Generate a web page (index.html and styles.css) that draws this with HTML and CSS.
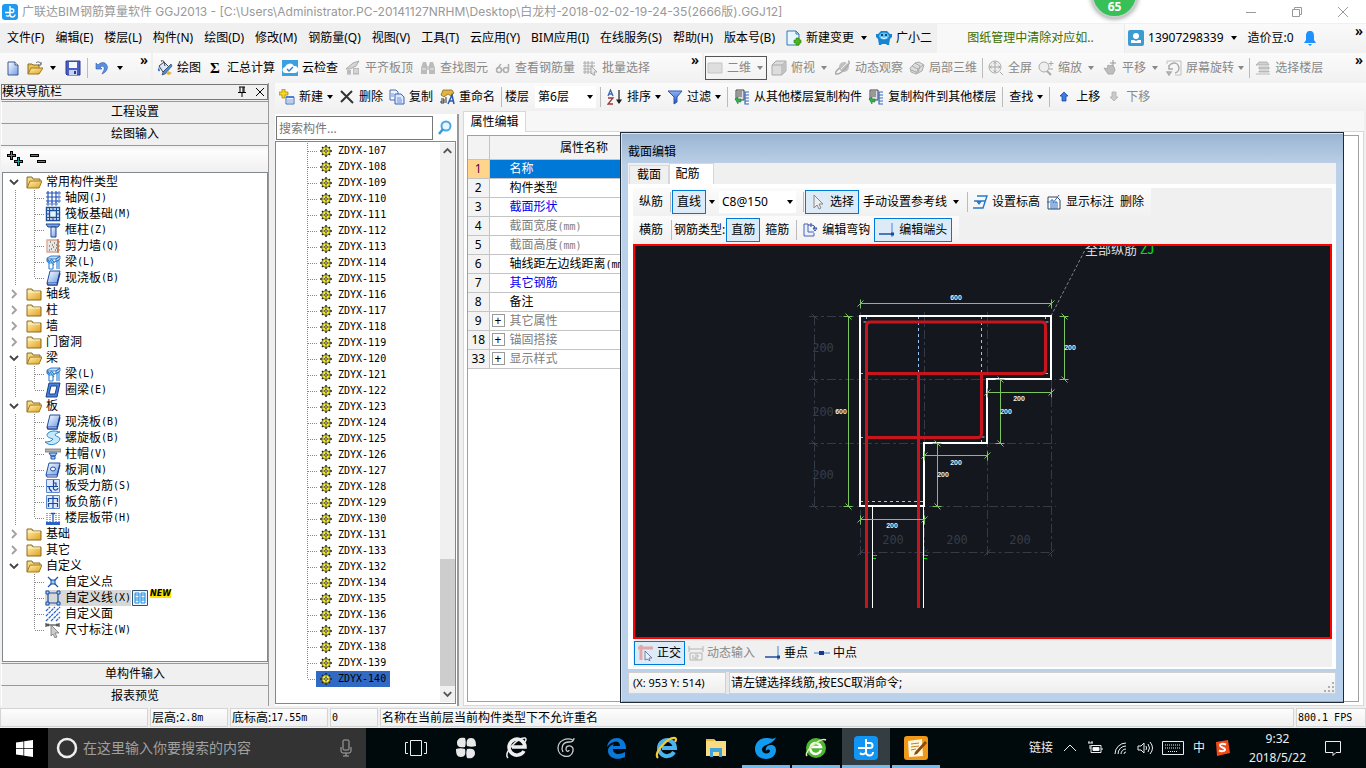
FILE: index.html
```
<!DOCTYPE html>
<html lang="zh-CN">
<head>
<meta charset="utf-8">
<title>广联达BIM钢筋算量软件 GGJ2013</title>
<link rel="stylesheet" href="styles.css">
</head>
<body>
<svg class="defs" aria-hidden="true">
  <defs>
    <linearGradient id="gold" x1="0" y1="0" x2="1" y2="1"><stop offset="0" stop-color="#fff3b0"/><stop offset="1" stop-color="#e0a020"/></linearGradient>
    <linearGradient id="blue" x1="0" y1="0" x2="1" y2="1"><stop offset="0" stop-color="#fff"/><stop offset="1" stop-color="#6f9be8"/></linearGradient>
    <linearGradient id="deep" x1="0" y1="0" x2="0" y2="1"><stop offset="0" stop-color="#8fb4f5"/><stop offset="1" stop-color="#1c4fc0"/></linearGradient>
  </defs>
  <symbol id="app" viewBox="0 0 16 16"><rect width="16" height="16" rx="3" fill="#1e9af0"/><path d="M8 2v8.500a2.500 2.500 0 0 0 5 0M8 5h2.500a1.800 1.800 0 0 1 0 3.500H3M8 10.500a2.500 2.500 0 0 1-4 1" fill="none" stroke="#fff" stroke-width="1.400"/></symbol>
  <symbol id="new" viewBox="0 0 16 16"><path d="M3 2h7l3 3v10H3z" fill="url(#blue)" stroke="#3c5a8c"/><path d="M10 2v3h3" fill="#fff" stroke="#3c5a8c"/></symbol>
  <symbol id="open" viewBox="0 0 16 16"><path d="M1 14V4h4l1 1h6v3" fill="#e9c25a" stroke="#8a6d1e"/><path d="M1 14l3-6h12l-4 6z" fill="url(#gold)" stroke="#a07818"/><path d="M9 3c2-2 4-1 5 1m0-2v3h-3" fill="none" stroke="#567"/></symbol>
  <symbol id="save" viewBox="0 0 16 16"><path d="M1 1h14v14H2l-1-1z" fill="#4a5fc4" stroke="#2a3a90"/><path d="M4 2h8v6H4z" fill="#f4f6ff"/><path d="M4 10h8v5H4z" fill="#c9d2f0"/><path d="M9 11h2v3H9z" fill="#2a3a90"/></symbol>
  <symbol id="undo" viewBox="0 0 16 16"><path d="M2 3v6h6L6 7c3-2 5 0 4 3l-2 4c5-2 7-7 4-10-2-2-5-2-8 1z" fill="#5a8fe0" stroke="#2c5cb0" stroke-width=".6"/></symbol>
  <symbol id="paint" viewBox="0 0 16 16"><path d="M2 6l5-4 5 5-6 5z" fill="#dce8f8" stroke="#345"/><path d="M2 7c-2 3-1 5 1 4" fill="#3a70c0"/><path d="M5 2c-2-2 1-3 2 0l1 4" fill="none" stroke="#445"/><path d="M14 4l1 2-7 8-3 1 1-3z" fill="#4a8fd8" stroke="#234" stroke-width=".6"/><path d="M11 11l4 2-3 2-3-1z" fill="#ebb432"/></symbol>
  <symbol id="cloud" viewBox="0 0 16 16"><rect width="16" height="16" fill="#3aa0e0"/><path d="M4 13a3 3 0 0 1-1-6 5 5 0 0 1 9-1 3.500 3.500 0 0 1 1 7z" fill="#fff"/><path d="M5 9l2 2 4-4" fill="none" stroke="#2288cc" stroke-width="1.400"/></symbol>
  <symbol id="align" viewBox="0 0 16 16"><path d="M1 9l7-6 6-2-3 5-6 3z" fill="#d5d5d5" stroke="#aaa"/><path d="M2 10h4v5H2zM8 8h6v7H8z" fill="#bbb"/><path d="M1 15h14M9 10h4M9 12h4" stroke="#eee"/></symbol>
  <symbol id="bino" viewBox="0 0 16 16"><path d="M3 2h3l1 3v9H1V8zM10 2h3l2 6v6H9V5z" fill="#bbb"/><path d="M7 6h2v4H7z" fill="#ccc"/><path d="M2 9h4M10 9h4" stroke="#eee"/></symbol>
  <symbol id="glasses" viewBox="0 0 16 16"><g fill="none" stroke="#b0b0b0" stroke-width="1.500"><circle cx="4" cy="10" r="2.500"/><circle cx="11" cy="10" r="2.500"/><path d="M2 9l4-5M13.500 10V4M6.500 10h2"/></g></symbol>
  <symbol id="batch" viewBox="0 0 16 16"><path d="M1 3h12M1 6h12M1 9h9M1 12h8M3 1v13M6 1v13M10 1v8" stroke="#aaa" fill="none"/><path d="M9 6l6 6h-3l1 3h-2l-1-2-1 1z" fill="#e8e8e8" stroke="#999" stroke-width=".8"/></symbol>
  <symbol id="plane" viewBox="0 0 16 16"><path d="M1 3h14v10H1z" fill="#dedede" stroke="#c4c4c4"/></symbol>
  <symbol id="cube" viewBox="0 0 16 16"><path d="M1 5l4-4h10v10l-4 4H1z" fill="#dcdcdc" stroke="#aaa"/><path d="M1 5h10v10M11 5l4-4" fill="none" stroke="#aaa"/><path d="M11 5l4-4v10l-4 4z" fill="#c2c2c2"/></symbol>
  <symbol id="orbit" viewBox="0 0 16 16"><circle cx="9" cy="7" r="5" fill="#c0c0c0"/><path d="M13 1c5 1-7 14-12 13-2-1 2-5 4-6" fill="none" stroke="#aaa" stroke-width="1.500"/><path d="M6 9l6-6" stroke="#eee"/></symbol>
  <symbol id="local3d" viewBox="0 0 16 16"><path d="M1 8l5-5 4-1 5 3-2 6-6 3-5-2z" fill="#ddd" stroke="#aaa"/><path d="M3 6l6 3 5-4M9 9l-2 5M6 3l5 3-2 7M2 10l5 2" fill="none" stroke="#aaa"/></symbol>
  <symbol id="fit" viewBox="0 0 16 16"><circle cx="7" cy="7" r="6" fill="#eee" stroke="#aaa"/><path d="M7 2v10M2 7h10M5.500 3.500L7 2l1.500 1.500M5.500 10.500L7 12l1.500-1.500M3.500 5.500L2 7l1.500 1.500M10.500 5.500L12 7l-1.500 1.500M12 12l3 3" stroke="#aaa" fill="none"/></symbol>
  <symbol id="scale" viewBox="0 0 16 16"><circle cx="6" cy="7" r="5" fill="#eee" stroke="#aaa"/><path d="M9 11l4 4" stroke="#aaa" stroke-width="2"/><path d="M13 1v5M10.500 3.500h5M11 9h4" stroke="#aaa"/></symbol>
  <symbol id="pan" viewBox="0 0 16 16"><path d="M2 8l3 1 1-4 2 1 2-1 2 2 1 3-2 4H6z" fill="#bdbdbd" stroke="#aaa"/><path d="M11 0v6M8 3h6" stroke="#999"/></symbol>
  <symbol id="rotate" viewBox="0 0 16 16"><path d="M1 4V1h14v14H9" fill="none" stroke="#c0c0c0"/><path d="M3 9a5 5 0 1 1 6 4M3 5v4h4M1 12h4l-2 3z" fill="none" stroke="#aaa" stroke-width="1.500"/></symbol>
  <symbol id="floors" viewBox="0 0 16 16"><path d="M4 2h8l2 3H1zM4 7h10v2H4zM4 11h10v1H4zM1 14h14" fill="#d0d0d0" stroke="#aaa" stroke-width=".8"/></symbol>
  <symbol id="docplus" viewBox="0 0 16 16"><path d="M1 1h9l3 3v11H1z" fill="#eaf6ff" stroke="#2e7ab8"/><path d="M10 1v3h3" fill="none" stroke="#2e7ab8"/><path d="M10 8h3v2h2v3h-2v2h-3v-2H8v-3h2z" fill="#4db51e" stroke="#2d7d10" stroke-width=".6"/></symbol>
  <symbol id="robot" viewBox="0 0 16 16"><path d="M5 1h6l3 3 2 0v3l-2 2-1 6h-2l-1-1H6l-1 1H3L2 9 0 7V4h2z" fill="#1684d0"/><ellipse cx="8" cy="6" rx="5" ry="3.500" fill="#5fc0f4"/><circle cx="6" cy="5" r="1" fill="#024"/><circle cx="10" cy="5" r="1" fill="#024"/><path d="M5 7.500q3 2 6 0" fill="none" stroke="#fff"/></symbol>
  <symbol id="user" viewBox="0 0 16 16"><rect width="16" height="16" rx="2" fill="#3a9cd2"/><circle cx="8" cy="6" r="3" fill="#fff"/><path d="M3 13V10h3l2 1 2-1h3v3z" fill="#fff"/></symbol>
  <symbol id="bell" viewBox="0 0 16 16"><path d="M8 1c3 0 4 2 4 5v4l2 3H2l2-3V6c0-3 1-5 4-5zM6 14h4l-2 2z" fill="#1e90ff"/></symbol>
  <symbol id="create" viewBox="0 0 16 16"><path d="M3 0h3v3h3v3H6v3H3V6H0V3h3z" fill="#f6d32a" stroke="#8d7300" stroke-width=".6"/><path d="M7 8h8v7H7z" fill="#eaf2ff" stroke="#456fc0"/><path d="M7 7h8v2H7z" fill="#4a7edc"/><path d="M8 11h6M8 13h6" stroke="#88a8dc"/></symbol>
  <symbol id="cross" viewBox="0 0 16 16"><path d="M2 2l12 12M13 2L2 13" stroke="#333" stroke-width="2" fill="none"/></symbol>
  <symbol id="copy" viewBox="0 0 16 16"><path d="M1 1h6l2 2v8H1z" fill="#eef4ff" stroke="#4a6cae"/><path d="M6 5h6l3 3v7H6z" fill="#dbe8ff" stroke="#3d62b0"/><path d="M8 9h4M8 11h5M8 13h5M2 5h3M2 7h3" stroke="#6d92d8"/></symbol>
  <symbol id="rename" viewBox="0 0 16 16"><path d="M4 1h9l2 3-3 3-3-2-4 3-3-2z" fill="#e2b53c" stroke="#765c1c" stroke-width=".7"/><path d="M9 15l4-9 2 9M10 12h5" stroke="#2858b0" stroke-width="1.500" fill="none"/><path d="M2 10h3v4H2v-2h3M7 8v6" stroke="#333" fill="none"/></symbol>
  <symbol id="sort" viewBox="0 0 16 16"><path d="M1 7l2.500-6L6 7M2 5h3" fill="none" stroke="#3c66b8" stroke-width="1.300"/><path d="M1 9h5l-5 6h5" fill="none" stroke="#a03838" stroke-width="1.300"/><path d="M12 1v12M10 11l2 3 2-3z" stroke="#222" stroke-width="1.200"/></symbol>
  <symbol id="funnel" viewBox="0 0 16 16"><path d="M1 2h14l-5 6v5l-3 2V8z" fill="url(#deep)" stroke="#2a56b0"/></symbol>
  <symbol id="fcopy" viewBox="0 0 16 16"><path d="M2 1h8v10H2z" fill="#ddd" stroke="#444"/><path d="M3 3h5M3 5h5M3 7h5" stroke="#555"/><path d="M1 10l3-2v2h3v3H4v2z" fill="#32b04a" stroke="#117028" stroke-width=".5"/><path d="M15 3h-4v12h4M11 6h4M11 9h4M11 12h4" stroke="#3468c0" fill="none" stroke-width="1.200"/></symbol>
  <symbol id="up" viewBox="0 0 16 16"><path d="M8 3l4 4h-2v5H6V7H4z" fill="#3d7bea" stroke="#1b49a0" stroke-width=".8"/></symbol>
  <symbol id="down" viewBox="0 0 16 16"><path d="M8 12l4-4h-2V3H6v5H4z" fill="#cacaca" stroke="#b0b0b0" stroke-width=".8"/></symbol>
  <symbol id="chev-d" viewBox="0 0 12 16"><path d="M2 6l4 4 4-4" fill="none" stroke="#444" stroke-width="1.800"/></symbol>
  <symbol id="chev-r" viewBox="0 0 12 16"><path d="M4 4l4 4-4 4" fill="none" stroke="#a0a0a0" stroke-width="1.800"/></symbol>
  <symbol id="fold" viewBox="0 0 16 16"><path d="M1 14V3h5l1 2h8v9z" fill="url(#gold)" stroke="#8a6a20"/><path d="M2 6h12" stroke="#fff8d0"/></symbol>
  <symbol id="foldo" viewBox="0 0 16 16"><path d="M1 14V3h5l1 2h7v3" fill="#f3d983" stroke="#8a6a20"/><path d="M1 14l3-7h12l-3 7z" fill="url(#gold)" stroke="#a07818"/></symbol>
  <symbol id="grid" viewBox="0 0 16 16"><path d="M1 3h12M1 7h12M1 11h12M3 1v13M7 1v13M11 1v13" stroke="#2456b8" stroke-width="1.200"/><path d="M13 2h2v2h-2zM13 6h2v2h-2zM13 10h2v2h-2zM2 13h2v2H2zM6 13h2v2H6zM10 13h2v2h-2z" fill="#fff" stroke="#2456b8" stroke-width=".8"/></symbol>
  <symbol id="raft" viewBox="0 0 16 16"><path d="M1.500 1.500h13v13h-13zM4.500 4.500h7v7h-7z" fill="#e6f0ff" stroke="#1b4f98" stroke-width="1.400"/><path d="M1 4.500h14M1 11.500h14M4.500 1v14M11.500 1v14M8 1v3M8 12v3M1 8h3M12 8h3" stroke="#1b4f98"/></symbol>
  <symbol id="col" viewBox="0 0 16 16"><path d="M1 2h14l-2 3H3z" fill="#7aa0ee" stroke="#1c4690"/><path d="M6 5h5v10H6z" fill="url(#blue)" stroke="#1c4690"/></symbol>
  <symbol id="wall" viewBox="0 0 16 16"><path d="M2 2h11v12H2z" fill="#e9e6e4" stroke="#d8a890" stroke-width="1.300"/><path d="M5 4h1M9 5h1M4 8h1M8 9h1M11 7h1M6 11h1M10 12h1M11 10h1M7 7h1M4 12h1" stroke="#444"/><path d="M13 1v14" stroke="#a05028"/><path d="M12 4h3M12 8h3M12 12h3" stroke="#d07020"/></symbol>
  <symbol id="beam" viewBox="0 0 16 16"><path d="M2 4l4-2h9l-4 3H2zM11 5l4-3v3l-4 3z" fill="#c2dcfa" stroke="#2a70c0" stroke-width=".9"/><path d="M4 15V9l-2-2V5M8 15V9l3-2M4 9h4M12 15V7l2-1v9M4 15h4M5 6l4 5M2 5l3 3M6 5l3 3" fill="none" stroke="#2a80d0" stroke-width="1.100"/></symbol>
  <symbol id="slab" viewBox="0 0 16 16"><path d="M5 1h10l-3 12H2z" fill="url(#blue)" stroke="#1c4fa0"/><path d="M2 13l1 2h9l3-12" fill="none" stroke="#16419a" stroke-width="1.300"/></symbol>
  <symbol id="ring" viewBox="0 0 16 16"><path d="M4 1h11l-3 14H1z" fill="#4b80dc" stroke="#163f90"/><path d="M6 4h6l-2 8H4z" fill="#fff" stroke="#163f90"/></symbol>
  <symbol id="spiral" viewBox="0 0 16 16"><path d="M3 3c4-3 8-2 12-1-3 1-5 2-5 3 2 2 5 2 5 4-1 4-7 7-12 5L0 12c4 0 7-1 8-3C5 8 0 7 3 3z" fill="#c4e8fc" stroke="#2685cc"/></symbol>
  <symbol id="cap" viewBox="0 0 16 16"><path d="M0 3h16v3H0z" fill="#b4b4b4" stroke="#666" stroke-width=".7"/><path d="M4 7h8l-2 3H6zM6 10h4v3H6z" fill="#a9caf5" stroke="#1c56b0"/></symbol>
  <symbol id="hole" viewBox="0 0 16 16"><path d="M4 1h11l-3 12H1z" fill="url(#blue)" stroke="#1c4fa0"/><path d="M1 13l1 2h10l3-12" fill="none" stroke="#16419a"/><ellipse cx="8" cy="7" rx="2.500" ry="2" fill="#fff" stroke="#1c4fa0"/></symbol>
  <symbol id="barS" viewBox="0 0 16 16"><path d="M1.500 1.500h13v13h-13z" fill="#dce8fc" stroke="#5c86d0"/><path d="M2 8.500h11M8.500 2v9a2.500 2.500 0 0 0 4.500-1M8.500 5h2.500v3M4 8.500c0 3 1 4 3 5" fill="none" stroke="#1648a8" stroke-width="1.200"/></symbol>
  <symbol id="barF" viewBox="0 0 16 16"><path d="M1.500 1.500h13v13h-13z" fill="#dce8fc" stroke="#5c86d0"/><path d="M3.500 8V4.500h9V8M8 2v12M3.500 13V9.500h9V13" fill="none" stroke="#1648a8" stroke-width="1.200"/></symbol>
  <symbol id="band" viewBox="0 0 16 16"><path d="M1 12h14v3H1z" fill="#2c62c8"/><path d="M2 3v9M14 3v9M5 3v9M11 3v9" fill="none" stroke="#2456b8" stroke-dasharray="1 1"/><path d="M6 3.500h4M8 3v9" stroke="#2456b8" stroke-width="1.300"/></symbol>
  <symbol id="pt" viewBox="0 0 16 16"><path d="M3 3l10 10M13 3L3 13" stroke="#1c4fa0" stroke-width="1.200"/><path d="M6 6h4v4H6z" fill="#8fd0ff" stroke="#1c4fa0"/></symbol>
  <symbol id="poly" viewBox="0 0 16 16"><path d="M3 3h10v10H3z" fill="none" stroke="#1c4fa0" stroke-width="1.200"/><path d="M1 1h3v3H1zM12 1h3v3h-3zM1 12h3v3H1zM12 12h3v3h-3z" fill="#a8d0ff" stroke="#1c4fa0"/></symbol>
  <symbol id="hatch" viewBox="0 0 16 16"><path d="M1 5l4-4M1 10l9-9M1 15L15 1M6 15l9-9M11 15l4-4" stroke="#2c66c8" stroke-width="1.300" stroke-dasharray="3 .7"/></symbol>
  <symbol id="dimn" viewBox="0 0 16 16"><path d="M1 1v4M14 1v4M1 3h13M3 1.500v3M12 1.500v3" stroke="#222"/><path d="M6 3l8 8h-4l2 4-2 1-2-4-2 2z" fill="#ccc" stroke="#777" stroke-width=".8"/></symbol>
  <symbol id="gear" viewBox="0 0 12 12"><path d="M6 0v12M0 6h12M2 2l8 8M10 2l-8 8" stroke="#222" stroke-width="1.500"/><circle cx="6" cy="6" r="4.200" fill="#f6ee20" stroke="#333" stroke-width=".8"/><path d="M6 2v8M2 6h8" stroke="#555" stroke-width=".7"/><circle cx="6" cy="6" r="1.300" fill="#fff" stroke="#222" stroke-width=".8"/></symbol>
  <symbol id="mag" viewBox="0 0 16 16"><circle cx="9" cy="6" r="4.500" fill="#e8f6ff" stroke="#4aa8e4" stroke-width="2"/><path d="M6 9l-4 5" stroke="#3c98dc" stroke-width="2.500"/></symbol>
  <symbol id="cursor" viewBox="0 0 16 16"><path d="M4 1l9 9H9l2 4-2 1-2-4-3 3z" fill="#eee" stroke="#888"/></symbol>
  <symbol id="level" viewBox="0 0 16 16"><path d="M5 2h10l-4 12H1M2 7h11" fill="none" stroke="#2878c8" stroke-width="1.400"/><path d="M4 7h6l-3 4z" fill="#2878c8"/></symbol>
  <symbol id="note" viewBox="0 0 16 16"><path d="M2 3h9l3 3v9H2z" fill="#fff" stroke="#345"/><path d="M5 15V6h2v9M9 15V8h2v7M1 8h3M13 1L7 9" stroke="#2868c0" fill="none"/></symbol>
  <symbol id="hook" viewBox="0 0 16 16"><path d="M2 2v12h10v-3M2 2h4v8h6" fill="#eaf0ff" stroke="#4a63b0"/><path d="M6 3h4q3 0 3 4M9 1v4M11 6h4l-2 3z" fill="none" stroke="#2c4ca0"/></symbol>
  <symbol id="perp" viewBox="0 0 16 16"><path d="M13 1v14" stroke="#78a8e0" stroke-width="1.500"/><path d="M0 12h13" stroke="#1c4fa0" stroke-width="1.500"/><path d="M12 10.500h3v3h-3z" fill="#1c4890"/></symbol>
  <symbol id="mid" viewBox="0 0 16 16"><path d="M0 8h16" stroke="#70a0e0" stroke-width="1.500"/><path d="M5 6h5v4H5z" fill="#1c3880"/></symbol>
  <symbol id="ortho" viewBox="0 0 16 16"><path d="M0 3h15M3 0v15" stroke="#e0a8a8" stroke-width="3"/><path d="M7 6l7 7h-3l1 3-3-2-2 1z" fill="#eef" stroke="#568" stroke-width=".8"/></symbol>
  <symbol id="dyn" viewBox="0 0 16 16"><path d="M1 1v6M15 1v6M1 4h14M2 8h12v7H2zM5 10v4M7 10h3v2H7v2h3" fill="none" stroke="#b4b4b4"/></symbol>
</svg>

<header class="titlebar">
  <svg class="ic"><use href="#app"/></svg>
  <h1>广联达BIM钢筋算量软件 GGJ2013 - [C:\Users\Administrator.PC-20141127NRHM\Desktop\白龙村-2018-02-02-19-24-35(2666版).GGJ12]</h1>
  <div class="winbtns">
    <button aria-label="最小化"><svg viewBox="0 0 12 12"><path d="M1 6.500h10"/></svg></button>
    <button aria-label="还原"><svg viewBox="0 0 12 12"><path d="M1.500 3.500h7v7h-7zM3.500 3.500v-2h7v7h-2"/></svg></button>
    <button aria-label="关闭"><svg viewBox="0 0 12 12"><path d="M1 1l10 10M11 1L1 11"/></svg></button>
  </div>
</header>
<div class="ball">65</div>

<nav class="menubar">
  <div class="menus">
    <button>文件(F)</button><button>编辑(E)</button><button>楼层(L)</button><button>构件(N)</button><button>绘图(D)</button><button>修改(M)</button><button>钢筋量(Q)</button><button>视图(V)</button><button>工具(T)</button><button>云应用(Y)</button><button>BIM应用(I)</button><button>在线服务(S)</button><button>帮助(H)</button><button>版本号(B)</button>
  </div>
  <button class="tb"><svg class="ic"><use href="#docplus"/></svg>新建变更<i class="caret wide"></i></button>
  <button class="tb"><svg class="ic"><use href="#robot"/></svg>广小二</button>
  <a class="notice" href="#">图纸管理中清除对应如..</a>
  <div class="account">
    <button class="tb"><svg class="ic"><use href="#user"/></svg>13907298339<i class="caret wide"></i></button>
    <span>造价豆:0</span>
    <button class="bell" aria-label="消息"><svg class="ic"><use href="#bell"/></svg></button>
    <b class="more">»</b>
  </div>
</nav>

<div class="bars">
  <div class="bar bar-file">
    <button class="tb" aria-label="新建"><svg class="ic"><use href="#new"/></svg></button>
    <button class="tb" aria-label="打开"><svg class="ic"><use href="#open"/></svg><i class="caret wide"></i></button>
    <button class="tb" aria-label="保存"><svg class="ic"><use href="#save"/></svg></button>
    <i class="sep"></i>
    <button class="tb" aria-label="撤销"><svg class="ic"><use href="#undo"/></svg><i class="caret wide"></i></button>
    <b class="more">»</b>
  </div>
  <div class="bar bar-draw">
    <button class="tb"><svg class="ic"><use href="#paint"/></svg>绘图</button>
    <button class="tb"><b class="sigma">Σ</b>汇总计算</button>
    <button class="tb"><svg class="ic"><use href="#cloud"/></svg>云检查</button>
    <button class="tb" disabled><svg class="ic"><use href="#align"/></svg>平齐板顶</button>
    <button class="tb" disabled><svg class="ic"><use href="#bino"/></svg>查找图元</button>
    <button class="tb" disabled><svg class="ic"><use href="#glasses"/></svg>查看钢筋量</button>
    <button class="tb" disabled><svg class="ic"><use href="#batch"/></svg>批量选择</button>
    <b class="more">»</b>
  </div>
  <div class="bar bar-view">
    <button class="tb boxed" disabled><svg class="ic"><use href="#plane"/></svg>二维<i class="caret wide"></i></button>
    <button class="tb" disabled><svg class="ic"><use href="#cube"/></svg>俯视<i class="caret wide"></i></button>
    <button class="tb" disabled><svg class="ic"><use href="#orbit"/></svg>动态观察</button>
    <button class="tb" disabled><svg class="ic"><use href="#local3d"/></svg>局部三维</button>
    <i class="sep"></i>
    <button class="tb" disabled><svg class="ic"><use href="#fit"/></svg>全屏</button>
    <button class="tb" disabled><svg class="ic"><use href="#scale"/></svg>缩放<i class="caret wide"></i></button>
    <button class="tb" disabled><svg class="ic"><use href="#pan"/></svg>平移<i class="caret wide"></i></button>
    <button class="tb" disabled><svg class="ic"><use href="#rotate"/></svg>屏幕旋转<i class="caret"></i></button>
    <i class="sep"></i>
    <button class="tb" disabled><svg class="ic"><use href="#floors"/></svg>选择楼层</button>
    <b class="more">»</b>
  </div>
</div>

<main class="work">
  <aside class="nav">
    <div class="nav-head"><span>模块导航栏</span>
      <button aria-label="固定"><svg viewBox="0 0 12 12"><path d="M4 1v5M8 1v5M3 1h6M2 6.500h8M6 7v4M7 1v5"/></svg></button>
      <button aria-label="关闭"><svg viewBox="0 0 12 12"><path d="M2 2l8 8M10 2l-8 8"/></svg></button>
    </div>
    <button class="nav-btn">工程设置</button>
    <button class="nav-btn">绘图输入</button>
    <div class="nav-tools">
      <button aria-label="全部展开"><svg viewBox="0 0 16 16"><path d="M4.500 0v9M0 4.500h9M11.500 6v9M7 10.500h9" stroke="#000" stroke-width="3"/><path d="M4.500 1v7M1 4.500h7M11.500 7v7M8 10.500h7" stroke="#1aa0a0"/></svg></button>
      <button aria-label="全部折叠"><svg viewBox="0 0 16 16"><path d="M0 4.500h9M7 10.500h9" stroke="#000" stroke-width="3"/><path d="M1 4.500h7M8 10.500h7" stroke="#1aa0a0"/></svg></button>
    </div>
    <ul class="tree">
      <li class="dir"><svg class="cv"><use href="#chev-d"/></svg><svg class="ic"><use href="#foldo"/></svg>常用构件类型</li>
      <li class="leaf"><svg class="ic"><use href="#grid"/></svg>轴网<kbd>(J)</kbd></li>
      <li class="leaf"><svg class="ic"><use href="#raft"/></svg>筏板基础<kbd>(M)</kbd></li>
      <li class="leaf"><svg class="ic"><use href="#col"/></svg>框柱<kbd>(Z)</kbd></li>
      <li class="leaf"><svg class="ic"><use href="#wall"/></svg>剪力墙<kbd>(Q)</kbd></li>
      <li class="leaf"><svg class="ic"><use href="#beam"/></svg>梁<kbd>(L)</kbd></li>
      <li class="leaf end"><svg class="ic"><use href="#slab"/></svg>现浇板<kbd>(B)</kbd></li>
      <li class="dir"><svg class="cv"><use href="#chev-r"/></svg><svg class="ic"><use href="#fold"/></svg>轴线</li>
      <li class="dir"><svg class="cv"><use href="#chev-r"/></svg><svg class="ic"><use href="#fold"/></svg>柱</li>
      <li class="dir"><svg class="cv"><use href="#chev-r"/></svg><svg class="ic"><use href="#fold"/></svg>墙</li>
      <li class="dir"><svg class="cv"><use href="#chev-r"/></svg><svg class="ic"><use href="#fold"/></svg>门窗洞</li>
      <li class="dir"><svg class="cv"><use href="#chev-d"/></svg><svg class="ic"><use href="#foldo"/></svg>梁</li>
      <li class="leaf"><svg class="ic"><use href="#beam"/></svg>梁<kbd>(L)</kbd></li>
      <li class="leaf end"><svg class="ic"><use href="#ring"/></svg>圈梁<kbd>(E)</kbd></li>
      <li class="dir"><svg class="cv"><use href="#chev-d"/></svg><svg class="ic"><use href="#foldo"/></svg>板</li>
      <li class="leaf"><svg class="ic"><use href="#slab"/></svg>现浇板<kbd>(B)</kbd></li>
      <li class="leaf"><svg class="ic"><use href="#spiral"/></svg>螺旋板<kbd>(B)</kbd></li>
      <li class="leaf"><svg class="ic"><use href="#cap"/></svg>柱帽<kbd>(V)</kbd></li>
      <li class="leaf"><svg class="ic"><use href="#hole"/></svg>板洞<kbd>(N)</kbd></li>
      <li class="leaf"><svg class="ic"><use href="#barS"/></svg>板受力筋<kbd>(S)</kbd></li>
      <li class="leaf"><svg class="ic"><use href="#barF"/></svg>板负筋<kbd>(F)</kbd></li>
      <li class="leaf end"><svg class="ic"><use href="#band"/></svg>楼层板带<kbd>(H)</kbd></li>
      <li class="dir"><svg class="cv"><use href="#chev-r"/></svg><svg class="ic"><use href="#fold"/></svg>基础</li>
      <li class="dir"><svg class="cv"><use href="#chev-r"/></svg><svg class="ic"><use href="#fold"/></svg>其它</li>
      <li class="dir"><svg class="cv"><use href="#chev-d"/></svg><svg class="ic"><use href="#foldo"/></svg>自定义</li>
      <li class="leaf last"><svg class="ic"><use href="#pt"/></svg>自定义点</li>
      <li class="leaf last"><span class="picked"><svg class="ic"><use href="#poly"/></svg>自定义线<kbd>(X)</kbd></span><svg class="ic" viewBox="0 0 16 16"><path d="M.5.5h15v15H.5z" fill="#eaf6ff" stroke="#35506c"/><path d="M3 3h4v10H3zM9 3h4v10H9zM3 5h4M9 5h4M3 8h4M9 8h4M3 10h4M9 10h4" fill="none" stroke="#1d8be0"/></svg><b class="new">NEW</b></li>
      <li class="leaf last"><svg class="ic"><use href="#hatch"/></svg>自定义面</li>
      <li class="leaf last end"><svg class="ic"><use href="#dimn"/></svg>尺寸标注<kbd>(W)</kbd></li>
    </ul>
    <button class="nav-btn">单构件输入</button>
    <button class="nav-btn">报表预览</button>
  </aside>

  <section class="right">
    <div class="bar bar-comp">
      <button class="tb"><svg class="ic"><use href="#create"/></svg>新建<i class="caret"></i></button>
      <button class="tb"><svg class="ic"><use href="#cross"/></svg>删除</button>
      <button class="tb"><svg class="ic"><use href="#copy"/></svg>复制</button>
      <button class="tb"><svg class="ic"><use href="#rename"/></svg>重命名</button>
      <i class="sep"></i>
      <label for="floor">楼层</label>
      <span class="combo"><select id="floor"><option>第6层</option></select></span>
      <i class="sep"></i>
      <button class="tb"><svg class="ic"><use href="#sort"/></svg>排序<i class="caret"></i></button>
      <button class="tb"><svg class="ic"><use href="#funnel"/></svg>过滤<i class="caret"></i></button>
      <i class="sep"></i>
      <button class="tb"><svg class="ic"><use href="#fcopy"/></svg>从其他楼层复制构件</button>
      <button class="tb"><svg class="ic"><use href="#fcopy"/></svg>复制构件到其他楼层</button>
      <i class="sep"></i>
      <button class="tb">查找<i class="caret"></i></button>
      <i class="sep"></i>
      <button class="tb"><svg class="ic"><use href="#up"/></svg>上移</button>
      <button class="tb" disabled><svg class="ic"><use href="#down"/></svg>下移</button>
    </div>
    <div class="panes">
      <div class="comps">
        <div class="search"><input type="text" aria-label="搜索构件" placeholder="搜索构件..."><button aria-label="搜索"><svg class="ic"><use href="#mag"/></svg></button></div>
        <div class="listbox">
          <ul class="list">
            <li><svg><use href="#gear"/></svg>ZDYX-107</li><li><svg><use href="#gear"/></svg>ZDYX-108</li>
            <li><svg><use href="#gear"/></svg>ZDYX-109</li><li><svg><use href="#gear"/></svg>ZDYX-110</li>
            <li><svg><use href="#gear"/></svg>ZDYX-111</li><li><svg><use href="#gear"/></svg>ZDYX-112</li>
            <li><svg><use href="#gear"/></svg>ZDYX-113</li><li><svg><use href="#gear"/></svg>ZDYX-114</li>
            <li><svg><use href="#gear"/></svg>ZDYX-115</li><li><svg><use href="#gear"/></svg>ZDYX-116</li>
            <li><svg><use href="#gear"/></svg>ZDYX-117</li><li><svg><use href="#gear"/></svg>ZDYX-118</li>
            <li><svg><use href="#gear"/></svg>ZDYX-119</li><li><svg><use href="#gear"/></svg>ZDYX-120</li>
            <li><svg><use href="#gear"/></svg>ZDYX-121</li><li><svg><use href="#gear"/></svg>ZDYX-122</li>
            <li><svg><use href="#gear"/></svg>ZDYX-123</li><li><svg><use href="#gear"/></svg>ZDYX-124</li>
            <li><svg><use href="#gear"/></svg>ZDYX-125</li><li><svg><use href="#gear"/></svg>ZDYX-126</li>
            <li><svg><use href="#gear"/></svg>ZDYX-127</li><li><svg><use href="#gear"/></svg>ZDYX-128</li>
            <li><svg><use href="#gear"/></svg>ZDYX-129</li><li><svg><use href="#gear"/></svg>ZDYX-130</li>
            <li><svg><use href="#gear"/></svg>ZDYX-131</li><li><svg><use href="#gear"/></svg>ZDYX-133</li>
            <li><svg><use href="#gear"/></svg>ZDYX-132</li><li><svg><use href="#gear"/></svg>ZDYX-134</li>
            <li><svg><use href="#gear"/></svg>ZDYX-135</li><li><svg><use href="#gear"/></svg>ZDYX-136</li>
            <li><svg><use href="#gear"/></svg>ZDYX-137</li><li><svg><use href="#gear"/></svg>ZDYX-138</li>
            <li><svg><use href="#gear"/></svg>ZDYX-139</li><li class="end"><span><svg><use href="#gear"/></svg>ZDYX-140</span></li>
          </ul>
          <div class="scroll">
            <svg viewBox="0 0 16 16"><path d="M4 10l4-4 4 4"/></svg>
            <i class="thumb"></i>
            <svg viewBox="0 0 16 16"><path d="M4 6l4 4 4-4"/></svg>
          </div>
        </div>
      </div>
      <div class="props">
        <div class="tabs"><button class="on">属性编辑</button></div>
        <div class="page">
          <div class="sheet">
          <table>
            <thead><tr><th></th><th>属性名称</th><th>属性值</th></tr></thead>
            <tbody>
              <tr class="cur"><th>1</th><td>名称</td><td></td></tr>
              <tr><th>2</th><td>构件类型</td><td></td></tr>
              <tr class="link"><th>3</th><td>截面形状</td><td></td></tr>
              <tr class="dim"><th>4</th><td>截面宽度<kbd>(mm)</kbd></td><td></td></tr>
              <tr class="dim"><th>5</th><td>截面高度<kbd>(mm)</kbd></td><td></td></tr>
              <tr><th>6</th><td>轴线距左边线距离<kbd>(mm)</kbd></td><td></td></tr>
              <tr class="link"><th>7</th><td>其它钢筋</td><td></td></tr>
              <tr><th>8</th><td>备注</td><td></td></tr>
              <tr class="dim grp"><th>9</th><td><button aria-label="展开">+</button>其它属性</td><td></td></tr>
              <tr class="dim grp"><th>18</th><td><button aria-label="展开">+</button>锚固搭接</td><td></td></tr>
              <tr class="dim grp"><th>33</th><td><button aria-label="展开">+</button>显示样式</td><td></td></tr>
            </tbody>
          </table>
          </div>
        </div>
      </div>
    </div>
  </section>
</main>

<footer class="status">
  <span class="s1"></span><span class="s2">层高:<kbd>2.8m</kbd></span><span class="s3">底标高:<kbd>17.55m</kbd></span><span class="s4"><kbd>0</kbd></span><span class="s5">名称在当前层当前构件类型下不允许重名</span><span class="s6"><kbd>800.1 FPS</kbd></span>
</footer>

<section class="dialog" role="dialog" aria-label="截面编辑">
  <h2>截面编辑</h2>
  <div class="dtabs"><button>截面</button><button class="on">配筋</button></div>
  <div class="dpage">
    <div class="dinner">
      <div class="bar dbar">
        <label for="dia" class="lead">纵筋</label><i class="sep"></i>
        <button class="tb hot">直线</button><i class="caret"></i>
        <span class="combo mid"><select id="dia"><option>C8@150</option></select></span>
        <i class="sep"></i>
        <button class="tb hot"><svg class="ic"><use href="#cursor"/></svg>选择</button>
        <button class="tb">手动设置参考线<i class="caret wide"></i></button>
        <i class="sep"></i>
        <button class="tb"><svg class="ic"><use href="#level"/></svg>设置标高</button>
        <button class="tb"><svg class="ic"><use href="#note"/></svg>显示标注</button>
        <button class="tb">删除</button>
      </div>
      <div class="bar dbar low">
        <span class="lead">横筋</span><i class="sep"></i><span>钢筋类型:</span>
        <button class="tb hot">直筋</button>
        <button class="tb">箍筋</button>
        <i class="sep"></i>
        <button class="tb"><svg class="ic"><use href="#hook"/></svg>编辑弯钩</button>
        <button class="tb hot"><svg class="ic"><use href="#perp"/></svg>编辑端头</button>
      </div>
      <svg class="cad" viewBox="635 246 695 391" preserveAspectRatio="xMidYMid slice" role="img" aria-label="配筋截面图">
        <defs>
          <marker id="tick" markerUnits="userSpaceOnUse" markerWidth="10" markerHeight="12" refX="5" refY="6" orient="auto"><path d="M5 2v9M2 9l6-6" stroke="#7cc460" fill="none"/></marker>
          <marker id="gtick" markerUnits="userSpaceOnUse" markerWidth="10" markerHeight="10" refX="5" refY="5" orient="auto"><path d="M2 8l6-6" stroke="#3a414d" fill="none"/></marker>
        </defs>
        <g class="axis">
          <path d="M809 316.500h245M809 379.500h247M809 443.500h247M809 506.500h247M860.500 312v246M924.500 312v246M987.500 312v246M1051.500 380v178"/>
          <path class="mark" d="M814.500 316.500v63v64v63M860.500 552.500h64h63h64"/>
        </g>
        <g class="ghost"><text x="823" y="352">200</text><text x="823" y="416">200</text><text x="823" y="479">200</text><text x="893" y="544">200</text><text x="957" y="544">200</text><text x="1020" y="544">200</text></g>
        <path class="leader" d="M1051 316l34-66"/>
        <path class="cover" d="M918.500 316v58M981.500 316v58M860 501.500h64M866.500 316v6h-6M1045.500 316v6h6M860 373.500h6M1045 373.500h6v6M860 437.500h6M981.500 443v-6h6"/>
        <path class="outline" d="M860 316h191v63h-64v64h-63v63h-64z"/>
        <path class="thin" d="M872.500 506v102M923.500 506v102"/>
        <g class="steel"><path d="M866.500 608V326q0-4 4-4h171q4 0 4 4v44q0 3.500-4 3.500h-175M866 437.500h112q3.500 0 3.500-4v-60M918.500 608V374"/></g>
        <path class="hookmark" d="M873 555.500h4M873 558.500h3M924 555.500h4M924 558.500h3"/>
        <path class="dims" d="M860.500 303.500h191M848.500 316.500v190M1064.500 316.500v63M987.500 392.500h64M1000.500 379.500v64M924.500 455.500h63M937.500 443.500v63M860.500 519.500h64"/>
        <g class="ticks">
          <path d="M860.500 303.500h191"/><path d="M848.500 316.500v190"/><path d="M1064.500 316.500v63"/><path d="M987.500 392.500h64"/><path d="M1000.500 379.500v64"/><path d="M924.500 455.500h63"/><path d="M937.500 443.500v63"/><path d="M860.500 519.500h64"/>
        </g>
        <g class="num"><text x="956" y="300">600</text><text x="841" y="414">600</text><text x="1070" y="350">200</text><text x="1019" y="401">200</text><text x="1006" y="414">200</text><text x="956" y="465">200</text><text x="943" y="477">200</text><text x="892" y="528">200</text></g>
        <text class="cap" x="1085" y="254">全部纵筋 <tspan class="zj">ZJ</tspan></text>
      </svg>
      <div class="bar snap">
        <button class="tb hot"><svg class="ic"><use href="#ortho"/></svg>正交</button>
        <button class="tb" disabled><svg class="ic"><use href="#dyn"/></svg>动态输入</button>
        <button class="tb gap"><svg class="ic"><use href="#perp"/></svg>垂点</button>
        <button class="tb"><svg class="ic"><use href="#mid"/></svg>中点</button>
      </div>
    </div>
  </div>
  <div class="dstatus"><span class="xy">(X: 953 Y: 514)</span><span class="tip">请左键选择线筋,按ESC取消命令;<svg class="grip" viewBox="0 0 12 12"><path d="M9 1h2v2H9zM9 5h2v2H9zM5 5h2v2H5zM9 9h2v2H9zM5 9h2v2H5zM1 9h2v2H1z" fill="#b0b0b0"/></svg></span></div>
</section>

<footer class="taskbar">
  <button class="start" aria-label="开始"><svg viewBox="0 0 16 16"><path d="M0 2.300L7 1.300V7.600H0zM7.700 1.200L16 0v7.600H7.700zM0 8.300h7v6.400l-7-1zM7.700 8.300H16V16l-8.300-1.200z" fill="#fff"/></svg></button>
  <div class="cortana">
    <svg class="ring" viewBox="0 0 22 22"><circle cx="11" cy="11" r="9" fill="none" stroke="#eee" stroke-width="2.500"/></svg>
    <input type="text" aria-label="搜索" placeholder="在这里输入你要搜索的内容">
    <svg class="mic" viewBox="0 0 12 18"><rect x="3" y="1" width="6" height="10" rx="1"/><path d="M1 8v4q0 2 2 2h6q2 0 2-2V8M6 14v3M3 17h6"/></svg>
  </div>
  <div class="apps">
    <button aria-label="任务视图"><svg viewBox="0 0 24 24"><path d="M6.500 4.500h11v15h-11zM4 6.500H1.500v11H4M20 6.500h2.500v11H20" fill="none" stroke="#eee"/></svg></button>
    <button aria-label="四叶"><svg viewBox="0 0 24 24"><path d="M11 2c-5-1-8 1-8 5s3 5 8 4c1-3 1-6 0-9zM22 10c0-5-1-8-5-8s-5 3-4 8c3 1 6 1 9 0zM13 22c5 1 8-1 8-5s-3-5-8-4c-1 3-1 6 0 9zM2 13c0 5 1 8 5 8s5-3 4-8c-3-1-6-1-9 0z" fill="#e8e8e8"/></svg></button>
    <button aria-label="浏览器"><svg viewBox="0 0 24 24"><path d="M20 15a8 8 0 1 1 1-4H8" fill="none" stroke="#eee" stroke-width="3.500"/><path d="M4 22C-1 17 14 1 21 2q2 1 0 4" fill="none" stroke="#eee" stroke-width="1.500"/></svg></button>
    <button aria-label="广联达助手"><svg viewBox="0 0 24 24"><path d="M19 4C12 1 4 5 4 12c0 9 13 12 15 3 1-6-7-7-7-2 0 3 3 3 3 1M20 2c0 3-2 4-5 4-7 0-8 6-6 10" fill="none" stroke="#ccc" stroke-width="1.300"/></svg></button>
    <button aria-label="Edge"><svg viewBox="0 0 24 24"><path d="M3 11C4 5 8 2 13 2c6 0 9 5 9 11H9c0 6 7 6 12 3v5C13 25 4 22 4 15c0-4 3-6 6-7-1 1-1 2-1 2h7c0-7-9-5-13 1z" fill="#0a78d8"/></svg></button>
    <button aria-label="Internet Explorer"><svg viewBox="0 0 24 24"><path d="M20 16a8 8 0 1 1 1-4H8" fill="none" stroke="#4ab4f0" stroke-width="4"/><path d="M4 22C-1 17 14 1 21 2q2 1 0 4" fill="none" stroke="#f5c838" stroke-width="2.200"/></svg></button>
    <button aria-label="文件资源管理器"><svg viewBox="0 0 24 24"><path d="M2 3h8l2 2h10v15H2z" fill="#f9dc82"/><path d="M2 3h8v2H2z" fill="#e8b840"/><path d="M6 12h12v9h-3v-5H9v5H6z" fill="#3da4dc"/></svg></button>
    <button class="run" aria-label="广联达"><svg viewBox="0 0 24 24"><path d="M22 1c-2 3-6 1-10 1C5 2 1 7 1 13c0 7 6 10 11 10 6 0 10-4 10-9 0-3-2-5-5-5-4 0-6 3-5 6 1-2 4-2 4 0 0 3-7 4-8-1C7 8 20 9 22 1z" fill="#109af0"/></svg></button>
    <button class="run" aria-label="360浏览器"><svg viewBox="0 0 24 24"><circle cx="12" cy="12" r="10" fill="#4eb830"/><path d="M17 14a5.500 5.500 0 1 1 0-3H8" fill="none" stroke="#fff" stroke-width="2.500"/><path d="M3 20C-1 16 16 1 22 4" fill="none" stroke="#d5f0a8" stroke-width="1.500"/></svg></button>
    <button class="run on" aria-label="GGJ2013"><svg viewBox="0 0 24 24"><rect width="24" height="24" rx="4" fill="#1095f5"/><path d="M12 3v13a3.500 3.500 0 0 0 7 0M12 7h4a2.500 2.500 0 0 1 0 5H4M12 16a3.500 3.500 0 0 1-6 1" fill="none" stroke="#fff" stroke-width="2"/></svg></button>
    <button class="run" aria-label="记事"><svg viewBox="0 0 24 24"><rect width="24" height="24" rx="3" fill="#f09818"/><path d="M4 5l14-2 1 17-14 1z" fill="#fff8e0"/><path d="M7 8l8-1M7 11l8-1M7 14l5-1" stroke="#c08020"/><path d="M21 5l2 2-10 11-3 1 1-3z" fill="#8c4a10"/></svg></button>
  </div>
  <div class="tray">
    <span class="lnk">链接</span>
    <svg viewBox="0 0 16 16"><path d="M2 11l6-6 6 6"/></svg>
    <svg viewBox="0 0 16 16"><path d="M4 5.500h10v7H4zM15 8v2M1 3h5M2 1v2M5 1v2M3 5v4"/><path d="M6 7.500h6v3H6z" fill="#fff"/></svg>
    <svg viewBox="0 0 16 16"><path d="M3 14A11 11 0 0 1 14 3M6 14a8 8 0 0 1 8-8M9 14a5 5 0 0 1 5-5M12 14a2 2 0 0 1 2-2" /></svg>
    <svg viewBox="0 0 16 16"><path d="M1 6h3l3-3v10l-3-3H1zM9 6q1 2 0 4M11 4q3 4 0 8M13 2q5 6 0 12"/></svg>
    <svg class="kb" viewBox="0 0 22 14"><path d="M.5.500h21v13H.5z" /><path d="M3 4h16M3 7h16M6 10.500h10" stroke-dasharray="1 1"/></svg>
    <span>中</span>
    <svg viewBox="0 0 16 16"><path d="M2 2l12-2 2 13-13 3z" fill="#f04a18" stroke="none"/><path d="M12 4.500c-3-1-6-1-6 1s5 2 5 4-4 2-6 1" stroke="#fff" stroke-width="2"/></svg>
    <time>9:32<br>2018/5/22</time>
    <button aria-label="通知"><svg viewBox="0 0 16 16"><path d="M.5 1.500h15v11H11L8 15.500V12.500H.5z"/></svg></button>
  </div>
</footer>
</body>
</html>
```

FILE: styles.css
```
* { box-sizing: border-box; }
html, body { height: 100%; }
body {
  margin: 0; display: flex; flex-direction: column; overflow: hidden;
  background: #f0f0f0; color: #000;
  font: 12px/16px "Noto Sans", "Noto Sans CJK SC", sans-serif;
  white-space: nowrap;
}
button, input, select { font: inherit; color: inherit; border: 0; background: none; padding: 0; margin: 0; border-radius: 0; }
button { display: inline-flex; align-items: center; justify-content: center; }
ul { list-style: none; margin: 0; padding: 0; }
svg { flex: none; }
.defs { position: absolute; width: 0; height: 0; }
.ic { width: 16px; height: 16px; }
kbd { font: 10px/16px "DejaVu Sans Mono", monospace; }

.titlebar { flex: none; height: 23px; display: flex; align-items: center; background: #fff; padding-left: 2px; gap: 4px; }
.titlebar h1 { margin: 0; font-family: Inter, "Noto Sans CJK SC", sans-serif; font-size: 12px; font-weight: 400; color: #999; flex: 1; }
.winbtns { display: flex; }
.winbtns button { width: 46px; height: 20px; }
.winbtns svg { width: 12px; height: 12px; fill: none; stroke: #999; }
.ball {
  position: absolute; left: 1091px; top: -29px; width: 47px; height: 47px; border-radius: 50%;
  background: #37bf58; border: 2px solid #c8d0cc; box-shadow: 0 1px 5px #999;
  color: #fff; font-weight: 700; display: flex; align-items: flex-end; justify-content: center; padding-bottom: 1px;
}

.menubar { flex: none; height: 30px; display: flex; align-items: center; }
.menus { display: flex; gap: 11px; padding: 0 8px 0 7px; }
.menubar > .tb { height: 24px; }
.notice {
  flex: none; width: 188px; height: 29px; margin-left: 2px; display: flex; align-items: center; justify-content: center;
  background: #f8f8f8; color: #3a6e00; text-decoration: none; border-right: 1px solid #eaeaea;
}
.account { flex: 1; height: 29px; display: flex; align-items: center; background: linear-gradient(#fafafa, #f1f1f1); gap: 5px; }
.bell { margin-left: 3px; }
.more { margin-left: auto; padding-right: 3px; align-self: flex-start; font-size: 14px; line-height: 14px; font-weight: 600; }

.tb { height: 24px; padding: 0 3px; gap: 4px; flex: none; }
.tb:disabled { color: #888; }
.caret { width: 0; height: 0; border: 3px solid transparent; border-top: 4px solid currentColor; border-bottom: 0; flex: none; }
.caret.wide { margin: 0 3px; }
.sep { width: 1px; height: 20px; background: #bbb; margin: 0 3px; flex: none; }
.bar { display: flex; align-items: center; background: linear-gradient(#fbfbfb, #f1f1f1); }
.bars { flex: none; display: flex; height: 30px; gap: 2px; }
.bar-file { width: 151px; padding-left: 2px; }
.bar-draw { width: 549px; padding-left: 1px; gap: 1px; }
.bar-view { flex: 1; }
.bar-view .caret.wide { margin: 0 2px; }
.bar-view .sep { margin: 0 2px; }
.sigma { width: 14px; margin-right: 1px; font: 700 15px/16px "Liberation Serif", serif; text-align: center; }
.boxed { border: 1px solid #555; padding: 0 1px; margin: 0 1px; }

.work { flex: 1; min-height: 0; display: flex; gap: 6px; }
.nav { flex: none; width: 269px; display: flex; flex-direction: column; border-right: 1px solid #999; padding: 1px 0 0 1px; gap: 1px; }
.nav-head { height: 16px; display: flex; align-items: center; border: 1px solid #777; gap: 6px; padding-right: 1px; }
.nav-head span { flex: 1; }
.nav-head svg { width: 12px; height: 12px; fill: none; stroke: #000; }
.nav-btn { width: 100%; height: 21px; border-top: 1px solid #999; border-left: 1px solid #fff; flex: none; }
.nav-tools { height: 26px; border-top: 1px solid #999; background: linear-gradient(#f1f1f1, #fdfdfd 20%, #f1f1f1); display: flex; align-items: center; padding-left: 6px; gap: 7px; flex: none; }
.nav-tools svg { width: 16px; height: 16px; }
.tree { flex: 1; min-height: 0; overflow: hidden; border: 1px solid #828790; margin-left: 1px; background: #fff; padding-top: 1px; }
.tree li { height: 16px; display: flex; align-items: center; gap: 4px; }
.tree kbd { margin-left: -4px; }
.cv { width: 12px; height: 16px; }
.dir { padding-left: 5px; }
.dir .ic { margin-left: 2px; }
.leaf {
  padding-left: 42px;
  background:
    repeating-linear-gradient(90deg, #888 0 1px, transparent 1px 2px) 32px 8px / 10px 1px no-repeat,
    repeating-linear-gradient(#888 0 1px, transparent 1px 2px) 31px 0 / 1px 16px no-repeat,
    repeating-linear-gradient(#888 0 1px, transparent 1px 2px) 12px 0 / 1px 16px no-repeat;
}
.leaf.last { background-size: 10px 1px, 1px 16px, 0 0; }
.leaf.end { background-size: 10px 1px, 1px 8px, 1px 16px; }
.leaf.last.end { background-size: 10px 1px, 1px 8px, 0 0; }
.picked { display: flex; align-items: center; gap: 4px; height: 16px; background: #d8d8d8; margin-right: -3px; }
.new { font: italic 700 8px/8px "DejaVu Sans", sans-serif; background: #ffe400; align-self: flex-start; margin-left: -2px; }

.right { flex: 1; min-width: 0; display: flex; flex-direction: column; }
.bar-comp { flex: none; height: 27px; padding-left: 1px; }
.combo { display: flex; align-items: center; background: #fff; height: 22px; width: 61px; margin: 0 1px 0 6px; padding: 0 3px; flex: none; }
.combo select { flex: 1; min-width: 0; appearance: none; }
.combo::after { content: ""; border: 3px solid transparent; border-top: 4px solid #000; border-bottom: 0; }
.panes { flex: 1; min-height: 0; display: flex; gap: 4px; }
.comps { flex: none; width: 184px; display: flex; flex-direction: column; background: #fff; border-right: 2px solid #999; margin-top: 4px; padding-top: 2px; }
.search { display: flex; align-items: center; height: 24px; gap: 4px; padding-left: 1px; flex: none; }
.search input { width: 157px; height: 24px; border: 1px solid #777; padding: 0 2px; }
.search input::placeholder { color: #777; opacity: 1; }
.listbox { flex: 1; min-height: 0; display: flex; border: 1px solid #828790; margin: 1px 1px 2px 0; padding: 1px 0; }
.list { flex: 1; font: 10px/16px "DejaVu Sans Mono", monospace; overflow: hidden; }
.list li {
  height: 16px; display: flex; align-items: center; gap: 6px; padding-left: 44px;
  background:
    repeating-linear-gradient(90deg, #888 0 1px, transparent 1px 2px) 32px 8px / 10px 1px no-repeat,
    repeating-linear-gradient(#888 0 1px, transparent 1px 2px) 31px 0 / 1px 16px no-repeat;
}
.list li.end { padding-left: 40px; background-size: 10px 1px, 1px 8px; }
.list li span { display: flex; align-items: center; gap: 6px; background: #316ac5; height: 16px; padding: 0 4px; }
.list svg { width: 12px; height: 12px; }
.scroll { width: 15px; display: flex; flex-direction: column; background: #f0f0f0; }
.scroll svg { width: 15px; height: 16px; fill: none; stroke: #555; stroke-width: 2; }
.thumb { width: 100%; height: 127px; background: #cdcdcd; margin-top: auto; }

.props { flex: 1; min-width: 0; display: flex; flex-direction: column; padding: 1px 2px 0 0; }
.tabs { display: flex; flex: none; height: 21px; border-bottom: 1px solid #d8d8d8; background: #f7f7f7; }
.tabs .on { background: #fff; border: 1px solid #d8d8d8; border-bottom: 0; width: 63px; height: 21px; }
.page { flex: 1; min-height: 0; display: flex; background: #fff; border: 1px solid #d8d8d8; border-top: 0; padding: 3px 4px 3px 3px; }
.sheet { flex: 1; min-width: 0; border: 1px solid #a0a0a0; overflow: hidden; }
.page table { width: 90%; border-collapse: collapse; table-layout: fixed; }
.page th, .page td { height: 19px; padding: 0; border: 1px solid #c4c4c4; border-left-width: 0; font-weight: 400; line-height: 17px; }
.page table th { background: #f3f3f3; }
.page thead th { height: 23px; border-top: 0; }
.page thead th:first-child { width: 21px; }
.page thead th:nth-child(2) { width: 190px; }
.page td { padding-left: 20px; overflow: hidden; }
.page .grp td:nth-child(2) { padding-left: 2px; }
.page td button { width: 13px; height: 13px; border: 1px solid #999; color: #000; margin-right: 5px; line-height: 11px; }
.cur td { background: #0078d7; color: #fff; }
.page .cur th { background: #ffd58c; color: #60003c; }
.link td { color: #0000f0; }
.dim td { color: #808080; }

.status { flex: none; height: 22px; display: flex; background: #f0f0f0; gap: 2px; padding: 2px 0 1px; }
.status span { border: 1px solid #d4d4d4; background: linear-gradient(#fdfdfd, #f0f0f0); padding-left: 1px; display: flex; align-items: center; }
.s1 { width: 148px; } .s2 { width: 78px; } .s3 { width: 98px; } .s4 { width: 48px; } .s5 { flex: 1; } .s6 { width: 70px; }

.dialog {
  position: absolute; left: 620px; top: 132px; width: 724px; height: 571px;
  display: flex; flex-direction: column; padding: 0 7px 8px;
  background: linear-gradient(#99b4d1, #bcd0e8 32px, #b9d1ea 60px);
  border: 1px solid #222b35; box-shadow: inset 1px 1px #d8e4f0, inset 0 -1px #50c8e0;
}
.dialog h2 { margin: 0; height: 30px; padding-top: 11px; font-size: 12px; line-height: 16px; font-weight: 400; }
.dtabs { display: flex; align-items: flex-end; background: #f0f0f0; height: 21px; padding-left: 1px; flex: none; }
.dtabs button { width: 40px; height: 19px; border: 1px solid #d8d8d8; border-bottom: 0; }
.dtabs .on { width: 45px; height: 21px; background: #fff; padding-right: 8px; }
.dpage { flex: 1; min-height: 0; display: flex; background: #fff; border-bottom: 1px solid #ccc; padding: 4px 4px 2px 5px; }
.dinner { flex: 1; min-width: 0; display: flex; flex-direction: column; background: #f0f0f0; }
.dbar { height: 28px; align-self: flex-start; padding-right: 4px; flex: none; }
.dbar .lead { padding-left: 6px; margin-right: 4px; }
.dbar > .hot { margin: 0 3px 0 0; }
.dbar > .hot + .tb { padding-left: 1px; }
.dbar > .sep { margin-right: 1px; }
.dbar .caret.wide { margin: 0 2px; }
.dbar .mid { width: 77px; margin: 0 4px; }
.low { gap: 1px; }
.hot { border: 1px solid #0078d7; background: #dcebf7; padding: 0 4px; }
.cad { flex: 1; min-height: 0; width: 100%; border: 2px solid #f00; background: #14171e; overflow: hidden; }
.snap { height: 28px; padding-left: 1px; background: #f0f0f0; flex: none; }
.snap .hot { padding: 0 3px; }
.snap .tb { gap: 3px; }
.snap .gap { margin-left: 4px; }
.dstatus { display: flex; gap: 3px; height: 22px; margin-top: 2px; flex: none; background: #e8e8e8; }
.dstatus span { border: 1px solid #d0d0d0; background: linear-gradient(#fbfbfb, #eee); display: flex; align-items: center; }
.dstatus .xy { width: 98px; padding-left: 4px; font-size: 11px; }
.dstatus .tip { flex: 1; padding-left: 1px; }
.grip { width: 12px; height: 12px; margin-left: auto; align-self: flex-end; }

.cad path { fill: none; }
.axis path { stroke: #343b47; stroke-dasharray: 9 3 3 3; }
.axis .mark { marker: url(#gtick); }
.ghost text { fill: #363d49; font: 12px "DejaVu Sans Mono", monospace; text-anchor: middle; }
.leader { stroke: #808488; stroke-dasharray: 3 2; }
.cover { stroke: #9cc4f0; stroke-dasharray: 3 3; }
.outline { stroke: #fff; stroke-width: 2; }
.thin { stroke: #fff; }
.steel path { stroke: #c8141c; stroke-width: 3; }
.hookmark { stroke: #00d800; }
.dims { stroke: #7cc460; }
.ticks path { stroke: none; marker: url(#tick); }
.ticks, #tick path { stroke: #7cc460; }
.num text { fill: #e4f4f4; font: 700 7px "Liberation Sans", sans-serif; text-anchor: middle; }
.cad .cap { fill: #ddd; font: 13px "Noto Sans CJK SC", sans-serif; }
.cad .zj { fill: #00e020; }

.taskbar { flex: none; height: 40px; display: flex; background: #000a0d; color: #eee; }
.start { width: 48px; background: #000; }
.start svg { width: 17px; height: 17px; }
.cortana { width: 318px; background: #333; display: flex; align-items: center; padding: 0 0 0 8px; gap: 5px; }
.ring { width: 22px; height: 22px; }
.cortana input { flex: 1; min-width: 0; font-size: 14px; }
.cortana input::placeholder { color: #a0a0a0; opacity: 1; }
.mic { width: 12px; height: 18px; fill: none; stroke: #aaa; }
.cortana { padding-right: 14px; }
.cortana .mic { margin: 0 -12px 0 0; }
.cortana .mic { margin: 0; }
.cortana { padding-right: 14px; }
.apps { display: flex; margin-left: 26px; gap: 2px; }
.apps button { width: 48px; border-bottom: 3px solid transparent; border-top: 3px solid transparent; }
.apps svg { width: 24px; height: 24px; }
.apps .run { border-bottom-color: #76b9ed; }
.apps .on { background: #343e42; border-top-color: #343e42; }
.tray { margin-left: auto; display: flex; align-items: center; gap: 9px; }
.tray svg { width: 16px; height: 16px; fill: none; stroke: #eee; }
.tray .kb { width: 22px; height: 14px; }
.tray time { text-align: center; margin: 0 10px; line-height: 19px; }
.tray button { padding-right: 25px; }
```
